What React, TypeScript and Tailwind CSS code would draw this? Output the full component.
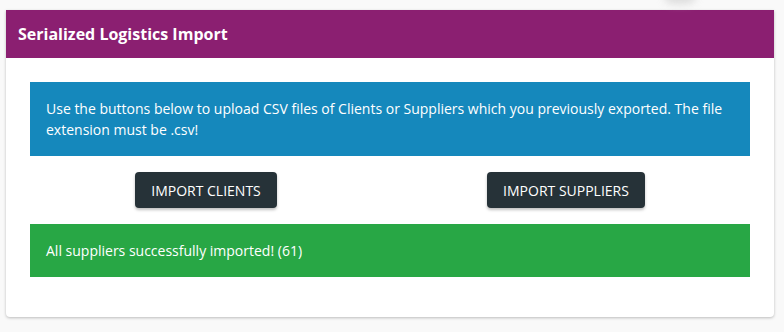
import React from 'react';

const App: React.FC = () => {
  return (
    <div
      className="relative w-[784px] h-[332px] bg-[#f9f9f9] pt-[10px] pl-[6px] pr-[10px] overflow-hidden"
      style={{ fontFamily: '"Open Sans", "Liberation Sans", sans-serif' }}
    >
      {/* faint blurred blob at the top edge */}
      <div className="absolute left-[664px] -top-[14px] w-[32px] h-[18px] rounded-full bg-[#c8c8c8] blur-[4px] opacity-60" />

      <div className="bg-white rounded-b-[4px] shadow-[0_1px_3px_rgba(0,0,0,0.25)]">
        <div className="h-[48px] bg-[#8b1f71] flex items-center pl-[12px]">
          <h2 className="text-white text-[16px] font-bold">Serialized Logistics Import</h2>
        </div>

        <div className="px-[24px] pt-[24px] pb-[40px]">
          <div className="bg-[#1588bc] text-white text-[14px] leading-[21px] px-[16px] py-[16px]">
            Use the buttons below to upload CSV files of Clients or Suppliers which you previously exported. The file
            extension must be .csv!
          </div>

          <div className="grid grid-cols-2 -ml-[4px] mr-[4px] my-[16px]">
            <div className="flex justify-center">
              <button
                type="button"
                className="h-[36px] px-[16px] bg-[#263238] text-white text-[14px] uppercase rounded-[4px] shadow-[0_2px_3px_rgba(0,0,0,0.25)]"
              >
                Import Clients
              </button>
            </div>
            <div className="flex justify-center">
              <button
                type="button"
                className="h-[36px] px-[16px] bg-[#263238] text-white text-[14px] uppercase rounded-[4px] shadow-[0_2px_3px_rgba(0,0,0,0.25)]"
              >
                Import Suppliers
              </button>
            </div>
          </div>

          <div className="bg-[#28a745] text-white text-[14px] leading-[21px] px-[16px] py-[16px]">
            All suppliers successfully imported! (61)
          </div>
        </div>
      </div>
    </div>
  );
};

export default App;
